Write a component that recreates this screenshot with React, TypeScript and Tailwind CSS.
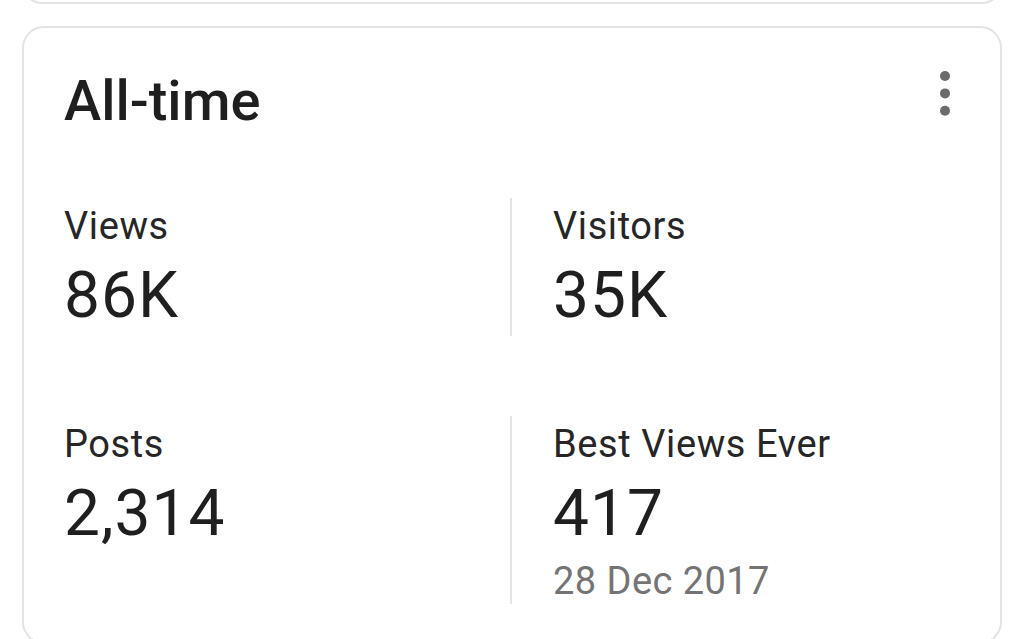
import React from 'react';

type Stat = {
  label: string;
  value: string;
  note?: string;
};

const stats: Stat[] = [
  { label: 'Views', value: '86K' },
  { label: 'Visitors', value: '35K' },
  { label: 'Posts', value: '2,314' },
  { label: 'Best Views Ever', value: '417', note: '28 Dec 2017' },
];

const MoreIcon = () => (
  <svg width="10" height="45" viewBox="0 0 10 45" className="mt-[-2px] shrink-0" aria-label="More options">
    <circle cx="5" cy="5" r="5" fill="#6b6b6b" />
    <circle cx="5" cy="22.4" r="5" fill="#6b6b6b" />
    <circle cx="5" cy="39.8" r="5" fill="#6b6b6b" />
  </svg>
);

const StatCell = ({ stat, divided }: { stat: Stat; divided: boolean }) => (
  <div
    className={`flex flex-col pt-[9px] ${stat.note ? 'pb-[4px]' : 'pb-[8px]'} ${
      divided ? 'border-l-2 border-[#e3e3e3] pl-[41px]' : ''
    }`}
  >
    <div className="text-[38px] leading-[38px] tracking-[0.6px] text-[#262626]">{stat.label}</div>
    <div className="mt-[19px] text-[64px] leading-[64px] tracking-[1px] text-[#1f1f1f]">{stat.value}</div>
    {stat.note && (
      <div className="mt-[16px] text-[38px] leading-[38px] tracking-[0.45px] text-[#747474]">{stat.note}</div>
    )}
  </div>
);

export default function App() {
  return (
    <div
      className="flex h-[639px] w-[1024px] flex-col overflow-hidden bg-white"
      style={{ fontFamily: 'Roboto, "Noto Sans", sans-serif' }}
    >
      <div className="mx-[22px] -mt-[36px] h-[40px] shrink-0 rounded-[22px] border-2 border-[#e3e3e3]" />

      <section className="mx-[22px] mt-[22px] shrink-0 rounded-[22px] border-2 border-[#e3e3e3] pb-[38px] pl-[40px] pr-[50px] pt-[45px]">
        <header className="flex items-start justify-between">
          <h2 className="text-[56px] font-medium leading-[56px] text-[#1f1f1f]">All-time</h2>
          <MoreIcon />
        </header>

        <div className="mt-[69px] grid grid-cols-[446px_1fr] gap-y-[80px]">
          {stats.map((stat, i) => (
            <StatCell key={stat.label} stat={stat} divided={i % 2 === 1} />
          ))}
        </div>
      </section>
    </div>
  );
}
